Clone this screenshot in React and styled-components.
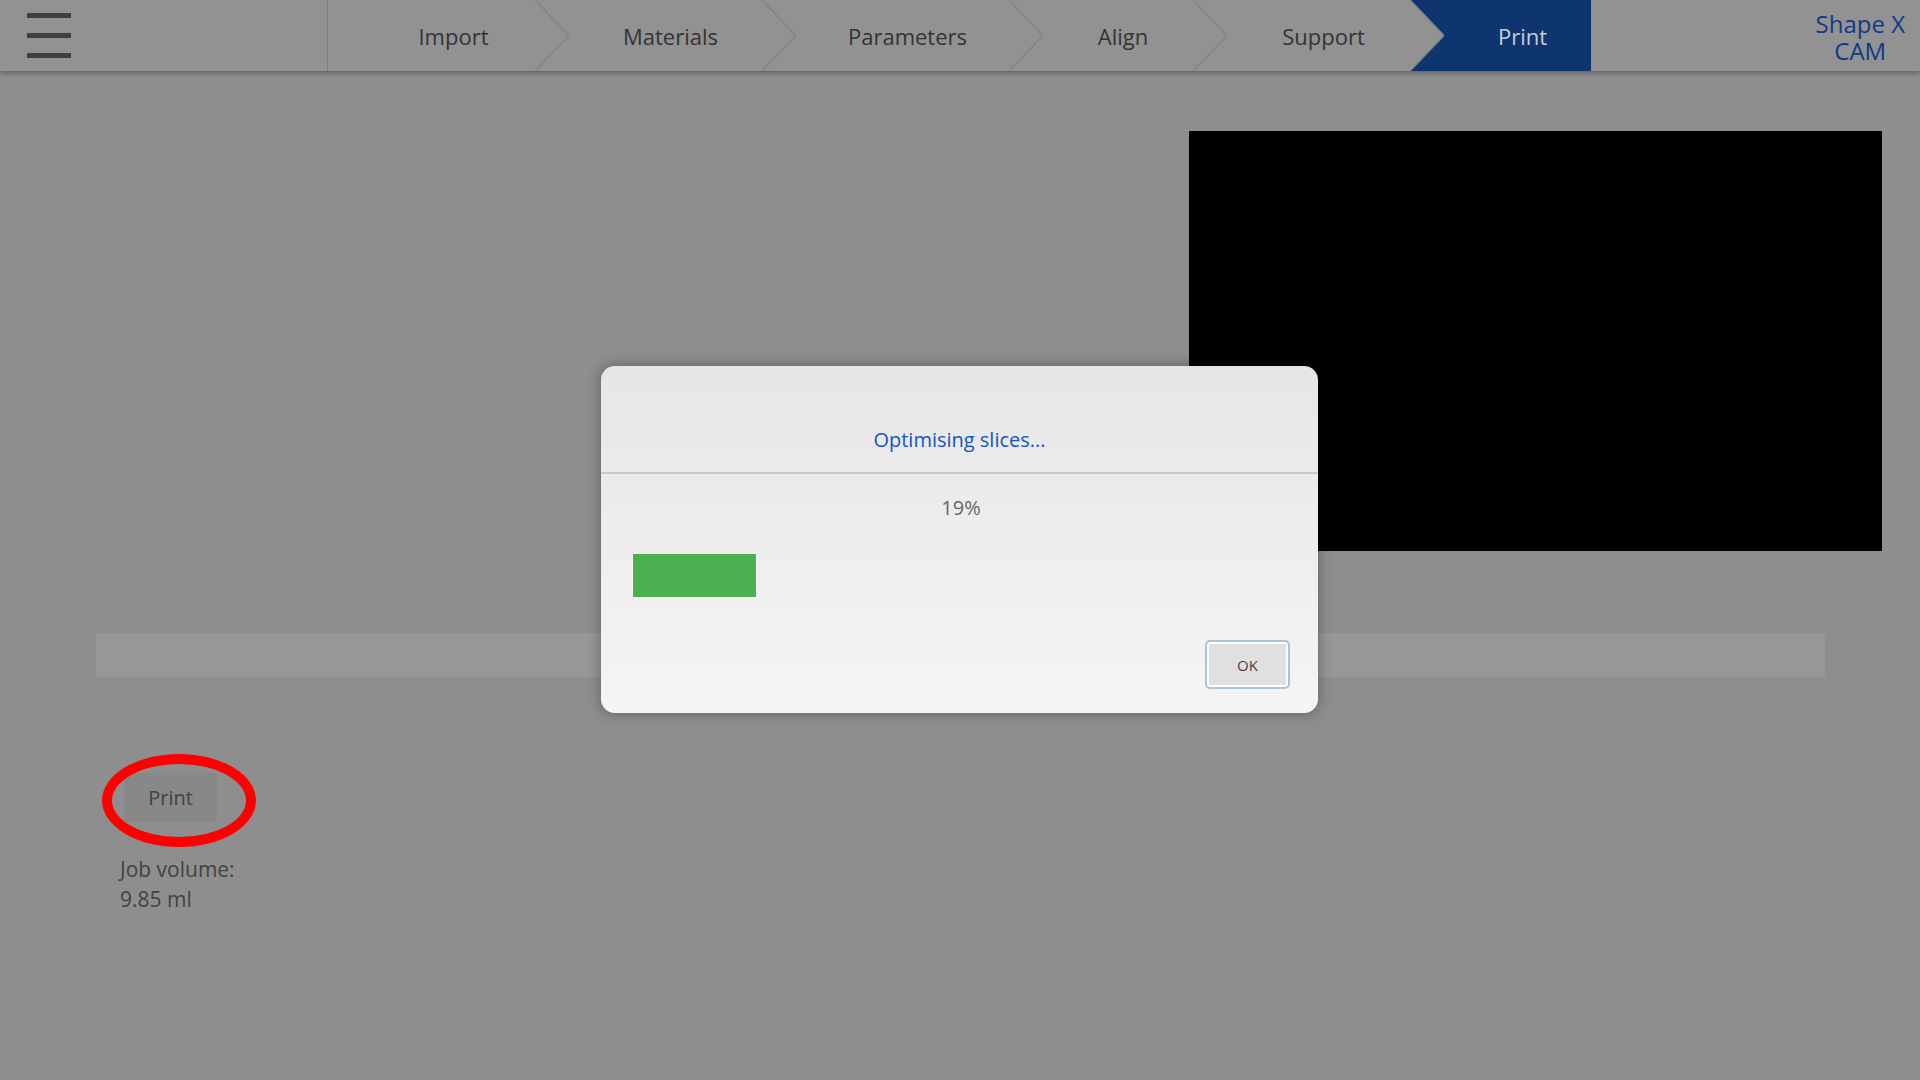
import React from "react";
import styled, { createGlobalStyle } from "styled-components";

const GlobalStyle = createGlobalStyle`
  html, body {
    margin: 0;
    padding: 0;
    background: #8e8e8e;
    font-family: "Open Sans", "Noto Sans", sans-serif;
  }
  * { box-sizing: border-box; }
`;

const Page = styled.div`
  width: 1920px;
  height: 1080px;
  position: relative;
  overflow: hidden;
  background: #8e8e8e;
`;

const TopBar = styled.header`
  height: 71px;
  display: flex;
  align-items: stretch;
  background: #929292;
  box-shadow: 0 2px 5px rgba(0, 0, 0, 0.35);
  position: relative;
  z-index: 1;
`;

const MenuArea = styled.div`
  width: 328px;
  border-right: 1px solid #7c7c7c;
  display: flex;
  align-items: center;
  padding-left: 27px;
`;

const Hamburger = styled.div`
  width: 44px;
  display: flex;
  flex-direction: column;
  gap: 15px;
  span {
    display: block;
    height: 5px;
    background: #3f3f3f;
  }
`;

const Steps = styled.nav`
  display: flex;
  align-items: stretch;
`;

const Step = styled.div`
  position: relative;
  width: ${(p) => p.w}px;
  flex-shrink: 0;
  display: flex;
  align-items: center;
  justify-content: center;
  padding-left: 44px;
  font-size: 22px;
  color: ${(p) => (p.active ? "#c9ccd3" : "#343434")};
  background: ${(p) => (p.active ? "#0f3571" : "transparent")};
  clip-path: ${(p) =>
    p.active ? "polygon(0 0, 100% 0, 100% 100%, 0 100%, 34px 50%)" : "none"};
`;

const Chevron = styled.svg`
  position: absolute;
  top: 0;
  right: -34px;
  width: 34px;
  height: 71px;
  z-index: 2;
`;

const Brand = styled.div`
  margin-left: auto;
  padding: 10px 15px 0 0;
  text-align: center;
  font-size: 24px;
  line-height: 27px;
  color: #0f3a86;
`;

const Viewer = styled.div`
  width: 693px;
  height: 420px;
  background: #000;
  margin: 60px 38px 0 auto;
`;

const Strip = styled.div`
  height: 44px;
  background: #979797;
  margin: 82px 95px 0 96px;
`;

const Actions = styled.div`
  margin: 96px 0 0 120px;
  display: flex;
  flex-direction: column;
  align-items: flex-start;
`;

const PrintButton = styled.div`
  position: relative;
  margin-left: 4px;
  width: 93px;
  height: 49px;
  display: flex;
  align-items: center;
  justify-content: center;
  background: #888888;
  color: #424242;
  font-size: 20px;
`;

const Highlight = styled.div`
  position: absolute;
  left: 50%;
  top: 50%;
  width: 154px;
  height: 93px;
  margin: -44px 0 0 -69px;
  border: 10px solid #ff0000;
  border-radius: 50%;
`;

const Volume = styled.div`
  margin-top: 32px;
  font-size: 21px;
  line-height: 30px;
  color: #424242;
`;

const Dialog = styled.div`
  position: absolute;
  left: 601px;
  top: 366px;
  width: 717px;
  height: 347px;
  border-radius: 14px;
  background: linear-gradient(#e6e6e6, #f5f5f5);
  box-shadow: 0 0 14px rgba(0, 0, 0, 0.35);
  display: flex;
  flex-direction: column;
  overflow: hidden;
`;

const DialogHeader = styled.div`
  height: 108px;
  display: flex;
  align-items: flex-end;
  justify-content: center;
  padding-bottom: 19px;
  border-bottom: 2px solid #c9c9c9;
  font-size: 20px;
  color: #1654c4;
`;

const DialogBody = styled.div`
  flex: 1;
  padding: 20px 28px 0 31px;
  display: flex;
  flex-direction: column;
`;

const Percent = styled.div`
  text-align: center;
  font-size: 20px;
  color: #666;
`;

const Track = styled.div`
  margin-top: 32px;
  height: 45px;
`;

const Fill = styled.div`
  height: 100%;
  background: #4caf50;
  border: 1px solid #f4f4f4;
`;

const Footer = styled.div`
  margin-top: auto;
  padding-bottom: 24px;
  display: flex;
  justify-content: flex-end;
`;

const OkButton = styled.button`
  width: 85px;
  height: 49px;
  border: 2px solid #a9c3da;
  box-shadow: inset 0 0 0 2px #ffffff;
  border-radius: 5px;
  background: #e0e0e0;
  color: #444;
  font-family: inherit;
  font-size: 15px;
`;

const steps = [
  { label: "Import", width: 207 },
  { label: "Materials", width: 227 },
  { label: "Parameters", width: 247 },
  { label: "Align", width: 184 },
  { label: "Support", width: 217 },
  { label: "Print", width: 181 },
];

export default function App() {
  const progress = 19;
  return (
    <Page>
      <GlobalStyle />
      <TopBar>
        <MenuArea>
          <Hamburger>
            <span />
            <span />
            <span />
          </Hamburger>
        </MenuArea>
        <Steps>
          {steps.map((s, i) => (
            <Step key={s.label} w={s.width} active={i === steps.length - 1}>
              {s.label}
              {i < steps.length - 1 && (
                <Chevron viewBox="0 0 34 71">
                  <polyline
                    points="0,0 34,35.5 0,71"
                    fill="none"
                    stroke="#848484"
                    strokeWidth="1.5"
                  />
                </Chevron>
              )}
            </Step>
          ))}
        </Steps>
        <Brand>
          Shape X
          <br />
          CAM
        </Brand>
      </TopBar>

      <Viewer />
      <Strip />
      <Actions>
        <PrintButton>
          Print
          <Highlight />
        </PrintButton>
        <Volume>
          Job volume:
          <br />
          9.85 ml
        </Volume>
      </Actions>

      <Dialog>
        <DialogHeader>Optimising slices...</DialogHeader>
        <DialogBody>
          <Percent>{progress}%</Percent>
          <Track>
            <Fill style={{ width: `${progress}%` }} />
          </Track>
          <Footer>
            <OkButton>OK</OkButton>
          </Footer>
        </DialogBody>
      </Dialog>
    </Page>
  );
}
